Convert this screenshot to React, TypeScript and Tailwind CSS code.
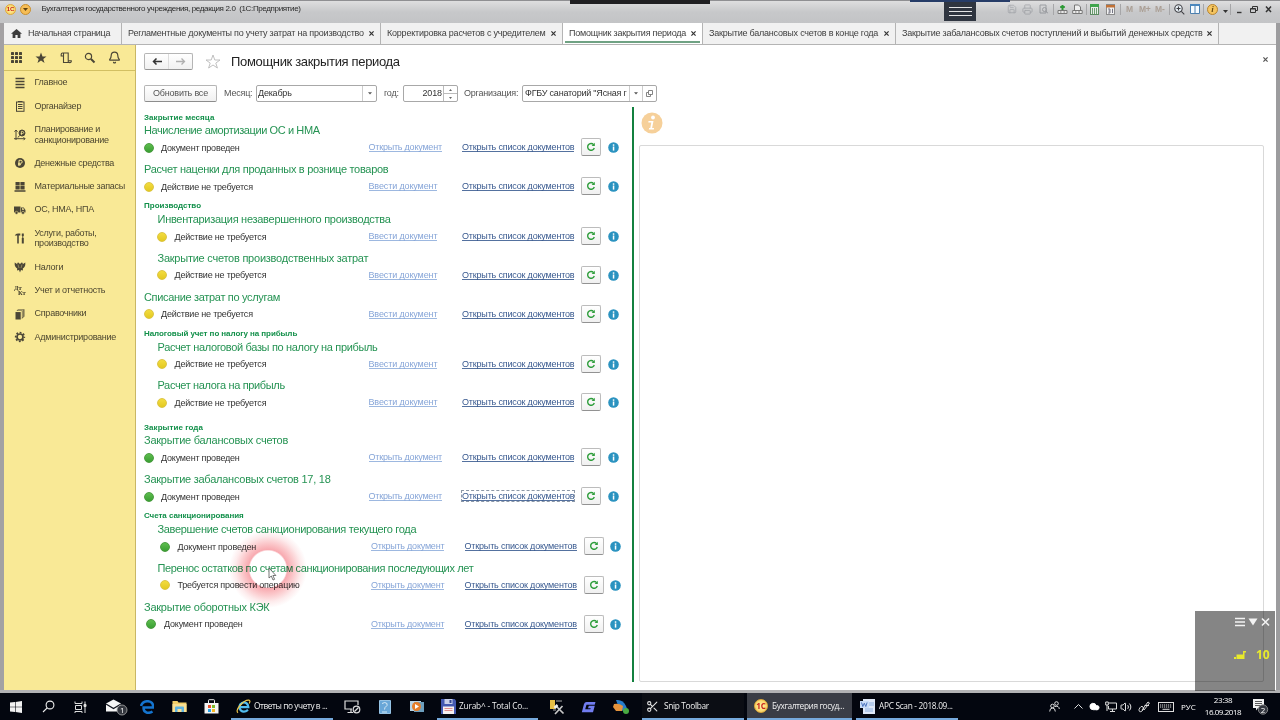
import React from "react";
import { Bell, Cloud, Volume2, Printer, Save, Scissors } from "lucide-react";

type Kind = "green" | "yellow";
type Item = { title: string; tw: string; state: string; kind: Kind; open?: boolean; indent?: boolean; shift?: boolean; focus?: boolean };
type Group = { head: string; hw?: string; gap?: boolean; items: Item[] };

const DONE = "Документ проведен";
const NONE = "Действие не требуется";

const groups: Group[] = [
  {
    head: "Закрытие месяца",
    hw: "tracking-[0.06px]",
    items: [
      { title: "Начисление амортизации ОС и НМА", tw: "tracking-[-0.4px]", state: DONE, kind: "green", open: true },
      { title: "Расчет наценки для проданных в рознице товаров", tw: "tracking-[-0.3px]", state: NONE, kind: "yellow" },
    ],
  },
  {
    head: "Производство",
    items: [
      { title: "Инвентаризация незавершенного производства", tw: "tracking-[-0.28px]", state: NONE, kind: "yellow", indent: true },
      { title: "Закрытие счетов производственных затрат", tw: "tracking-[-0.24px]", state: NONE, kind: "yellow", indent: true },
      { title: "Списание затрат по услугам", tw: "tracking-[-0.33px]", state: NONE, kind: "yellow" },
    ],
  },
  {
    head: "Налоговый учет по налогу на прибыль",
    hw: "tracking-[-0.07px]",
    items: [
      { title: "Расчет налоговой базы по налогу на прибыль", tw: "tracking-[-0.34px]", state: NONE, kind: "yellow", indent: true },
      { title: "Расчет налога на прибыль", tw: "tracking-[-0.35px]", state: NONE, kind: "yellow", indent: true },
    ],
  },
  {
    head: "Закрытие года",
    hw: "tracking-[0.06px]",
    gap: true,
    items: [
      { title: "Закрытие балансовых счетов", tw: "tracking-[-0.25px]", state: DONE, kind: "green", open: true },
      { title: "Закрытие забалансовых счетов 17, 18", tw: "tracking-[-0.25px]", state: DONE, kind: "green", open: true, focus: true },
    ],
  },
  {
    head: "Счета санкционирования",
    hw: "tracking-[-0.06px]",
    items: [
      { title: "Завершение счетов санкционирования текущего года", tw: "tracking-[-0.32px]", state: DONE, kind: "green", open: true, indent: true, shift: true },
      { title: "Перенос остатков по счетам санкционирования последующих лет", tw: "tracking-[-0.37px]", state: "Требуется провести операцию", kind: "yellow", open: true, indent: true, shift: true },
      { title: "Закрытие оборотных КЭК", tw: "tracking-[-0.24px]", state: DONE, kind: "green", open: true, shift: true },
    ],
  },
];

function Reload() {
  return (
    <svg width="10" height="10" viewBox="0 0 10 10" fill="none">
      <path d="M7.6 2.6A3.4 3.4 0 1 0 8.3 6" stroke="#2f9e3c" strokeWidth="1.4" />
      <path d="M5.6 3.9h3.2V.8z" fill="#2f9e3c" />
    </svg>
  );
}

function InfoDot() {
  return (
    <svg width="11" height="11" viewBox="0 0 11 11">
      <circle cx="5.5" cy="5.5" r="5.3" fill="#2b93c0" />
      <rect x="4.8" y="2.3" width="1.5" height="1.5" fill="#fff" />
      <rect x="4.8" y="4.5" width="1.5" height="4.1" fill="#fff" />
    </svg>
  );
}

function Row({ it }: { it: Item }) {
  return (
    <div className={`h-[38.7px] ${it.indent ? "pl-[13.5px]" : ""}`}>
      <div className={`flex h-[14px] items-center whitespace-nowrap text-[11px] leading-[14px] text-[#259353] ${it.tw}`}>{it.title}</div>
      <div className={`flex h-[20px] items-center whitespace-nowrap text-[9px] ${it.shift ? "ml-[2.500px]" : ""}`}>
        <div className={`-ml-[0.500px] flex items-center pt-[1px] ${it.indent ? "w-[211.500px]" : "w-[225px]"} ${it.shift ? "gap-[8px]" : "gap-[7.500px]"}`}>
          <span
            className={`size-[10px] rounded-full border ${
              it.kind === "green"
                ? "border-[#4a9c40] bg-linear-to-b from-[#5dbd4e] to-[#3a9f33]"
                : "border-[#dcc544] bg-linear-to-b from-[#f3dc3e] to-[#e3c91f]"
            }`}
          />
          <span className="leading-[10px] tracking-[-0.200px] text-[#333]">{it.state}</span>
        </div>
        <div className="flex w-[93.500px] text-[#86a5d8]">
          <span className={`h-[10px] border-b border-[#9db8e0] leading-[11px] ${it.open ? "tracking-[-0.220px]" : "tracking-[-0.130px]"}`}>{it.open ? "Открыть документ" : "Ввести документ"}</span>
        </div>
        <div className="flex w-[119px] text-[#38598f]">
          <span className={`h-[10px] border-b border-[#54719f] leading-[11px] tracking-[-0.180px] ${it.focus ? "outline-1 outline-dashed outline-[#8c98a8]" : ""}`}>Открыть список документов</span>
        </div>
        <div className="flex h-[18px] w-[20px] items-center justify-center rounded-[2px] border border-[#bcbcbc] border-b-[#929292] bg-linear-to-b from-white to-[#f0f0f0]">
          <Reload />
        </div>
        <div className="ml-[6.500px] pt-[1px]">
          <InfoDot />
        </div>
      </div>
    </div>
  );
}

const S = "#4b4636";
const sideIcons: Record<string, React.ReactNode> = {
  main: <path d="M1.5 1.5h9M1.5 4.500h9M1.5 7.500h9M1.5 10.500h9" stroke={S} strokeWidth="1.3" />,
  org: (
    <g fill="none" stroke={S}>
      <rect x="2.5" y="2" width="7.5" height="9.3" />
      <path d="M4 1.5h4.5M4 4.5h4.5M4 6.5h4.5M4 8.5h4.5" />
    </g>
  ),
  plan: (
    <g fill="none" stroke={S}>
      <path d="M2 1v10M.5 2.7 2 1l1.500 1.7M0 9.700h11M9.500 8.200 11 9.700 9.500 11.200" />
      <circle cx="8" cy="4" r="3" fill={S} />
      <path d="M7.400 6V2.500h1.300q1 .1 1 1t-1 1H6.700" stroke="#f9e996" strokeWidth=".8" />
      <path d="M4 8.500 5.500 6.500" />
    </g>
  ),
  money: (
    <g>
      <circle cx="6" cy="6" r="5" fill={S} />
      <path d="M5 9V3.300h1.800q1.400.1 1.400 1.500T6.800 6.300H4M4 7.700h3" stroke="#f9e996" fill="none" />
    </g>
  ),
  stock: (
    <g fill={S}>
      <path d="M1.500 1h4.200v3.500H1.500zM6.400 1h4.200v3.500H6.400zM1.500 5.100h4.200v3.400H1.500zM6.400 5.100h4.200v3.400H6.400zM.5 9.300h11v1.500H.5z" />
    </g>
  ),
  truck: (
    <g fill={S}>
      <path d="M0 2.500h6.500v6H0zM7 3.500h2.700L11.500 6v2.500H7z" />
      <circle cx="2.500" cy="8.800" r="1.500" stroke="#f9e996" strokeWidth=".5" />
      <circle cx="9" cy="8.800" r="1.500" stroke="#f9e996" strokeWidth=".5" />
      <path d="M8 4.300h1.400l.9 1.500H8z" fill="#f9e996" />
    </g>
  ),
  tools: (
    <g fill={S}>
      <path d="M.8 3.800Q1.500 1.500 4 1.500h2.300v2H4.800v8H3.200v-8H2z" />
      <path d="M7.800 1.500h2v2.500h-2zM8.300 4h1v2h-1zM7.800 6h2v5.500h-2z" />
    </g>
  ),
  eagle: (
    <g fill={S}>
      <path d="M.7 1.500 3 3l1-1.700L6 3l2-1.700L9 3l2.300-1.500q.4 4.500-2.500 6L9 9.500 7 9l-1 2.500L5 9l-2 .5.200-2Q.3 6 .7 1.500z" />
      <path d="m4 3.500 1 3.500M8 3.500 7 7" stroke="#f9e996" strokeWidth=".4" />
    </g>
  ),
  books: (
    <g fill={S}>
      <path d="M1.500 4h5.300v7.500H1.500z" />
      <path d="M2.500 3 4 1.300h6.500v7.200L7.700 11V3.100z" opacity=".8" />
      <path d="M2.300 3.600h5v7M3.800 2.200h5v7" stroke="#f9e996" strokeWidth=".5" fill="none" />
    </g>
  ),
  gear: (
    <g fill="none" stroke={S}>
      <circle cx="6" cy="6" r="3" strokeWidth="1.700" />
      <circle cx="6" cy="6" r="4.400" strokeWidth="1.500" strokeDasharray="1.850 1.606" strokeDashoffset=".9" />
    </g>
  ),
};

const side: { icon: string; lines: string[]; h: string }[] = [
  { icon: "main", lines: ["Главное"], h: "h-[23.3px]" },
  { icon: "org", lines: ["Органайзер"], h: "h-[23.3px]" },
  { icon: "plan", lines: ["Планирование и", "санкционирование"], h: "h-[34px]" },
  { icon: "money", lines: ["Денежные средства"], h: "h-[23.3px]" },
  { icon: "stock", lines: ["Материальные запасы"], h: "h-[23.3px]" },
  { icon: "truck", lines: ["ОС, НМА, НПА"], h: "h-[23.3px]" },
  { icon: "tools", lines: ["Услуги, работы,", "производство"], h: "h-[34px]" },
  { icon: "eagle", lines: ["Налоги"], h: "h-[23.3px]" },
  { icon: "dtkt", lines: ["Учет и отчетность"], h: "h-[23.3px]" },
  { icon: "books", lines: ["Справочники"], h: "h-[23.3px]" },
  { icon: "gear", lines: ["Администрирование"], h: "h-[23.3px]" },
];

function SideIcon({ n }: { n: string }) {
  if (n === "dtkt")
    return (
      <span className="flex w-[12px] flex-col font-['Liberation_Serif',serif] text-[6.500px] font-bold leading-[5px] text-[#3b3626]">
        <span>Дт</span>
        <span className="pl-[4px]">Кт</span>
      </span>
    );
  return (
    <svg width="12" height="12" viewBox="0 0 12 12">
      {sideIcons[n]}
    </svg>
  );
}

function Sidebar() {
  return (
    <div className="flex w-[132px] flex-col border-r border-[#c9b765] bg-[#f9e996]">
      <div className="flex h-[26px] items-center border-b border-[#d2bf62] pl-[7px] text-[#4b4636]">
        <svg width="11" height="11" viewBox="0 0 11 11" fill={S}>
          {[0, 4, 8].map((y) => [0, 4, 8].map((x) => <rect key={`${x}${y}`} x={x} y={y} width="3" height="3" rx=".6" />))}
        </svg>
        <svg className="ml-[13px] mt-[1px]" width="12" height="12" viewBox="0 0 12 12" fill={S}>
          <path d="m6 .6 1.500 3.900h4L8.300 7l1.200 4L6 8.600 2.500 11l1.200-4L.5 4.500h4z" />
        </svg>
        <svg className="ml-[13px]" width="13" height="12" viewBox="0 0 13 12" fill="none" stroke={S} strokeWidth="1.1">
          <path d="M3.500 4H1.200V2.300Q1.300 1 2.500 1h5.700v7.500M3.500 1.500v9h6.300M8 8.700h3.300q.2 1.900-1.600 1.900Q8 10.600 8 8.700" />
        </svg>
        <svg className="ml-[11px]" width="12" height="12" viewBox="0 0 12 12" fill="none" stroke={S}>
          <circle cx="4.500" cy="4.500" r="3.100" strokeWidth="1.200" />
          <path d="m7 7 3.500 3.500" strokeWidth="2" />
        </svg>
        <Bell className="ml-[12px]" size={13} strokeWidth={2.2} />
      </div>
      <div className="flex flex-col">
        {side.map((s) => (
          <div key={s.icon} className={`flex items-center pl-[10px] ${s.h}`}>
            <SideIcon n={s.icon} />
            <div className="ml-[8.500px] whitespace-nowrap text-[9px] leading-[10.700px] tracking-[-0.250px] text-[#4c4630]">
              {s.lines.map((l) => (
                <div key={l}>{l}</div>
              ))}
            </div>
          </div>
        ))}
      </div>
    </div>
  );
}

function OneC({ className = "" }: { className?: string }) {
  return (
    <span className={`flex items-center justify-center rounded-full border border-[#e0a93a] bg-radial from-[#fff3a8] to-[#f6c945] font-bold text-[#c8221a] ${className}`}>1С</span>
  );
}

function Sep({ className = "" }: { className?: string }) {
  return <span className={`h-[11px] w-px bg-[#a6a6a8] ${className}`} />;
}

function TopBar() {
  return (
    <div className="flex h-[23px] items-start border-t border-[#8f8f92] bg-linear-to-b from-[#dededf] via-[#c7c8ca] to-[#c3c4c6]">
      <div className="flex h-[16px] flex-1 items-center pl-[5px]">
        <OneC className="h-[11px] w-[11px] text-[6px]" />
        <span className="ml-[4px] flex size-[11px] items-center justify-center rounded-full border border-[#c98f2e] bg-[#f6bd55]">
          <svg width="5" height="3" viewBox="0 0 5 3">
            <path d="M0 0h5L2.500 3z" fill="#5f4210" />
          </svg>
        </span>
        <span className="ml-[10.500px] whitespace-pre text-[8px] tracking-[-0.360px] text-[#2a2a2a]">Бухгалтерия государственного учреждения, редакция 2.0  (1С:Предприятие)</span>
      </div>
      <div className="flex h-[16px] items-center text-[#8c8f95]">
        <Save size={10} className="opacity-60" />
        <Printer size={11} className="ml-[5px] opacity-60" />
        <svg className="ml-[6px] opacity-60" width="9" height="10" viewBox="0 0 9 10" fill="none" stroke="#777a80">
          <path d="M1 1h6v8H1z" />
          <circle cx="5.500" cy="5.500" r="2" />
          <path d="m7 7 2 2.500" />
        </svg>
        <Sep className="ml-[5px] mr-[3px]" />
        <svg width="11" height="11" viewBox="0 0 11 11" fill="none" stroke="#777">
          <path d="M1 6.500h9v3H1zM3 8h1.500M6.500 8H8" fill="#e9e9e9" />
          <path d="M5.500 6V1M3.200 3h4.600" stroke="#2e9a36" strokeWidth="2" />
        </svg>
        <svg className="ml-[4px]" width="11" height="11" viewBox="0 0 11 11" fill="#eee" stroke="#777">
          <path d="M2.500 6V1h4l2 2v3M.7 6.500h9.500v3H.7z" />
          <path d="M3 8h1.500M6 8h2" />
        </svg>
        <Sep className="ml-[3px] mr-[3px]" />
        <svg width="9" height="11" viewBox="0 0 9 11">
          <rect x=".5" y=".5" width="8" height="10" fill="#e8eee8" stroke="#5d8b62" />
          <path d="M0 0h9v3H0z" fill="#3fa54c" />
          <path d="M2.500 4v6M4.500 4v6M6.500 4v6" stroke="#6c9c70" />
        </svg>
        <svg className="ml-[7px]" width="9" height="11" viewBox="0 0 9 11">
          <rect x=".5" y=".5" width="8" height="10" fill="#f2f2f2" stroke="#8b8b8b" />
          <path d="M0 1h9v2.500H0z" fill="#c07136" />
          <path d="M2 5h2v2H2.500M4 7v2H2M6.500 4.800V9" stroke="#667" fill="none" strokeWidth=".9" />
        </svg>
        <Sep className="ml-[5px] mr-[5px]" />
        <span className="w-[7px] text-[8.500px] font-bold text-[#ab9f95]">M</span>
        <span className="ml-[6px] w-[12px] text-[8.500px] font-bold tracking-[-0.3px] text-[#ab9f95]">M+</span>
        <span className="ml-[4px] w-[10px] text-[8.500px] font-bold text-[#ab9f95]">M-</span>
        <Sep className="ml-[4px] mr-[4px]" />
        <svg width="11" height="11" viewBox="0 0 11 11" fill="none" stroke="#3e3e42" strokeWidth="1.100">
          <circle cx="4.500" cy="4.500" r="3.700" fill="#e6eef4" />
          <path d="M2.500 4.500h4M4.500 2.500v4M7.300 7.300l3 3" />
        </svg>
        <svg className="ml-[5px]" width="10" height="10" viewBox="0 0 10 10">
          <path d="M.5.5h9v9h-9zM5 1v8" fill="#f6fbff" stroke="#4b7fae" />
          <path d="M0 0h10v2H0z" fill="#4b87bd" />
        </svg>
        <Sep className="ml-[3px] mr-[3px]" />
        <span className="flex size-[11px] items-center justify-center rounded-full border border-[#b98530] bg-[#f5c560] font-['Liberation_Serif',serif] text-[9px] font-bold italic leading-none text-[#6b4c12]">i</span>
        <svg className="ml-[5px] mt-[4px]" width="5" height="3" viewBox="0 0 5 3">
          <path d="M0 0h5L2.500 3z" fill="#333" />
        </svg>
        <Sep className="ml-[2px]" />
        <svg className="ml-[5px] mr-[8px]" width="36" height="9" viewBox="0 0 36 9" fill="none" stroke="#333">
          <path d="M1 7.500h4.500" strokeWidth="1.400" />
          <path d="M16.500 3V1.500h5v4H20M14.500 3.500h5v4h-5zM14.500 4h5" />
          <path d="m30 1.500 5 5.500M35 1.500 30 7" strokeWidth="1.500" />
        </svg>
      </div>
    </div>
  );
}

const tabs: { t: string; w: string; active?: boolean }[] = [
  { t: "Регламентные документы по учету затрат на производство", w: "w-[259px]" },
  { t: "Корректировка расчетов с учредителем", w: "w-[182px]" },
  { t: "Помощник закрытия периода", w: "w-[140px]", active: true },
  { t: "Закрытие балансовых счетов в конце года", w: "w-[193px]" },
  { t: "Закрытие забалансовых счетов поступлений и выбытий денежных средств", w: "w-[323px]" },
];

function Cross({ c = "#333" }: { c?: string }) {
  return (
    <svg className="shrink-0" width="5" height="5" viewBox="0 0 5 5">
      <path d="m.4.4 4.200 4.200M4.600.4.400 4.600" stroke={c} strokeWidth="1.200" />
    </svg>
  );
}

function Tabs() {
  return (
    <div className="flex h-[22px] border-b border-[#b4b4b4] bg-[#f1f1f1] text-[9px] tracking-[-0.220px] text-[#404040]">
      <div className="flex w-[118px] items-center border-r border-[#b4b4b4] pl-[7px]">
        <svg width="11" height="9" viewBox="0 0 11 9" fill="#3c3c3c">
          <path d="M5.500 0 11 4.700H9.400V9H6.600V6H4.400v3H1.600V4.700H0z" />
        </svg>
        <span className="ml-[6px] whitespace-nowrap tracking-[-0.270px]">Начальная страница</span>
      </div>
      {tabs.map((t) => (
        <div key={t.t} className={`flex flex-col border-r border-[#b4b4b4] ${t.w} ${t.active ? "bg-white px-[2px]" : ""}`}>
          <div className={`flex items-center justify-between whitespace-nowrap ${t.active ? "h-[18px] pl-[4px] pr-[4px] pt-[3px]" : "h-[21px] pl-[6px] pr-[6px]"}`}>
            <span>{t.t}</span>
            <Cross />
          </div>
          {t.active && <div className="h-[2px] bg-[#6fa283]" />}
        </div>
      ))}
    </div>
  );
}

const field = "flex h-[17px] items-center rounded-[2px] border border-[#a8a8a8] bg-white text-[9px] text-[#333]";

function Down() {
  return (
    <svg width="4" height="3" viewBox="0 0 4 3">
      <path d="M0 .3h4L2 2.600z" fill="#555" />
    </svg>
  );
}

function Toolbar() {
  return (
    <div className="h-[62px] pl-[8px]">
      <div className="flex h-[33px] items-center">
        <div className="flex h-[17px] w-[49px] rounded-[2px] border border-[#b5b5b5] border-b-[#959595] bg-linear-to-b from-white to-[#f1f1f1]">
          <div className="flex flex-1 items-center justify-center border-r border-[#ddd]">
            <svg width="10" height="7" viewBox="0 0 10 7">
              <path d="M10 3.500H2M4.500.500l-3 3 3 3" stroke="#333" strokeWidth="1.500" fill="none" />
            </svg>
          </div>
          <div className="flex flex-1 items-center justify-center">
            <svg width="10" height="7" viewBox="0 0 10 7">
              <path d="M0 3.500h8M5.500.500l3 3-3 3" stroke="#b0b0b0" strokeWidth="1.300" fill="none" />
            </svg>
          </div>
        </div>
        <svg className="ml-[12px]" width="16" height="15" viewBox="0 0 16 15" fill="none" stroke="#b9b9b9" strokeWidth=".9">
          <path d="m8 1 1.800 5h5.200l-4.200 3.100L12.400 14 8 11l-4.400 3 1.600-4.900L1 6h5.200z" />
        </svg>
        <h1 className="ml-[10px] whitespace-nowrap text-[13px] tracking-[-0.330px] text-[#222]">Помощник закрытия периода</h1>
      </div>
      <div className="mt-[7px] flex h-[17px] items-center whitespace-nowrap text-[9px] tracking-[-0.210px] text-[#555]">
        <div className="flex h-[17px] w-[73px] items-center justify-center rounded-[2px] border border-[#b5b5b5] border-b-[#8d8d8d] bg-linear-to-b from-white to-[#f0f0f0]">Обновить все</div>
        <span className="ml-[7px] w-[32px]">Месяц:</span>
        <div className={`${field} w-[121px] pl-[1px]`}>
          <span className="flex-1">Декабрь</span>
          <span className="flex h-full w-[14px] items-center justify-center border-l border-[#ccc]"><Down /></span>
        </div>
        <span className="ml-[7px] w-[19px]">год:</span>
        <div className={`${field} w-[55px]`}>
          <span className="flex-1 pr-px text-right tracking-[-0.100px]">2018</span>
          <span className="flex h-full w-[14px] flex-col items-center border-l border-[#bbb]">
            <span className="flex w-full flex-1 items-center justify-center border-b border-[#bbb]">
              <svg width="3" height="2" viewBox="0 0 3 2"><path d="M0 2h3L1.500 0z" fill="#666" /></svg>
            </span>
            <span className="flex flex-1 items-center">
              <svg width="3" height="2" viewBox="0 0 3 2"><path d="M0 0h3L1.500 2z" fill="#666" /></svg>
            </span>
          </span>
        </div>
        <span className="ml-[6px] w-[58px]">Организация:</span>
        <div className={`${field} w-[135px] pl-[2px]`}>
          <span className="w-[104px]">ФГБУ санаторий "Ясная г</span>
          <span className="flex h-full flex-1 items-center justify-center border-l border-[#ccc]"><Down /></span>
          <span className="flex h-full w-[14px] items-center justify-center border-l border-[#ccc]">
            <svg width="7" height="7" viewBox="0 0 7 7" fill="none" stroke="#777" strokeWidth=".9">
              <path d="M2.500.500h4v4h-4zM2.500 2.500h-2v4h4v-2" />
            </svg>
          </span>
        </div>
      </div>
    </div>
  );
}

const segoe = "font-['Open_Sans','Noto_Sans',sans-serif]";

function Task({ w, label, tr = "", children, active, bg }: { w: string; label: string; tr?: string; children: React.ReactNode; active?: boolean; bg?: boolean }) {
  return (
    <div className={`flex h-full shrink-0 flex-col ${w} ${active ? "bg-[#3a3d46]" : bg ? "bg-[#0b0d14]" : ""}`}>
      <div className="flex h-[25px] items-center gap-[4px] pl-[4px] pt-[1px]">
        {children}
        <span className={`whitespace-nowrap text-[8.300px] text-[#f0f0f0] ${tr}`}>{label}</span>
      </div>
      <div className="h-[2px] bg-[#76a9dc]" />
    </div>
  );
}

function Taskbar() {
  return (
    <div className={`flex h-[27px] items-center bg-[#03060f] text-white ${segoe}`}>
      <div className="flex h-full w-[231px] items-center pl-[10px]">
        <svg width="12" height="12" viewBox="0 0 12 12" fill="#f2f2f2">
          <path d="M0 1.600 5 1v4.700H0zM5.600.9 12 0v5.700H5.600zM0 6.300h5V11l-5-.6zM5.600 6.300H12V12l-6.400-.9z" />
        </svg>
        <svg className="ml-[20px]" width="13" height="13" viewBox="0 0 13 13" fill="none" stroke="#eee" strokeWidth="1.100">
          <circle cx="8" cy="5" r="3.900" />
          <path d="M5.200 7.800 1 12" />
        </svg>
        <svg className="ml-[19px]" width="13" height="12" viewBox="0 0 13 12" fill="none" stroke="#ddd">
          <path d="M1 .5v2h7v-2M1.500 4.500h6v4h-6zM1 12v-1.500h7V12M11 .5v11.500" />
          <path d="M10 3.500h2v2h-2z" fill="#ddd" />
        </svg>
        <svg className="ml-[18px]" width="23" height="18" viewBox="0 0 23 18">
          <path d="M1 5.500 8.500 1.500 16 5.500v8H1z" fill="#f5f5f5" />
          <path d="m1 6 7.500 4.500L16 6" fill="none" stroke="#10131c" strokeWidth="1.300" />
          <circle cx="17" cy="12" r="5" fill="#34373f" stroke="#aaa" strokeWidth=".8" />
          <text x="15.100" y="15" fontSize="8" fill="#fff">1</text>
        </svg>
        <svg className="ml-[12px]" width="14" height="14" viewBox="0 0 14 14" fill="none">
          <path d="M12.500 11.500q-2.500 1.700-5.500 1.200-3.800-.8-3.400-5.200h9.500Q13.500 1.300 7.500 1.200 2.500 1.200 1 6" stroke="#1474cf" strokeWidth="2.500" />
        </svg>
        <svg className="ml-[18px]" width="15" height="13" viewBox="0 0 15 13">
          <path d="M.5 1h5l1 1.500h8V12H.5z" fill="#f4cf68" />
          <path d="M.5 4h14v8H.5z" fill="#fae093" />
          <path d="M3 12V7.500q0-1 1-1h7q1 0 1 1V12H9.500V9h-4v3z" fill="#62b5e0" />
        </svg>
        <svg className="ml-[17px]" width="15" height="15" viewBox="0 0 15 15">
          <path d="M.5 4h14v10.500H.5z" fill="#f4f4f4" />
          <path d="M4.500 4V1.300q.1-.6.700-.6h4.600q.6 0 .7.600V4" fill="none" stroke="#eee" />
          <path d="M4 6h3v3H4z" fill="#e9522d" />
          <path d="M8 6h3v3H8z" fill="#7cb928" />
          <path d="M4 10h3v3H4z" fill="#2aa3e8" />
          <path d="M8 10h3v3H8z" fill="#f7b721" />
        </svg>
      </div>
      <Task w="w-[102px]" label="Ответы по учету в ..." tr="tracking-[-0.420px] -ml-px">
        <svg className="ml-[1px]" width="15" height="15" viewBox="0 0 15 15" fill="none">
          <path d="M12 10.800q-4 3.300-7.200.6Q2.500 9 4.200 5.500 7 2 10.500 4.200q1.800 1.300 1.800 3.900H4" stroke="#51bdf0" strokeWidth="2.300" />
          <path d="M2 13.800Q-.5 12 4 6.500 9 .6 13.200 1.200q1.500.6 0 3.300" stroke="#efc64a" strokeWidth="1.200" />
        </svg>
      </Task>
      <div className="flex h-full w-[104px] items-center pl-[11px]">
        <svg width="17" height="14" viewBox="0 0 17 14" fill="none" stroke="#ddd" strokeWidth="1.200">
          <path d="M8 9H1V1h13v4M7 9v3M3.500 12.500H9" />
          <circle cx="12.500" cy="9.500" r="3.300" />
          <path d="m10.500 11.500 4-4" />
        </svg>
        <svg className="ml-[18px]" width="12" height="14" viewBox="0 0 12 14">
          <path d="M.5.5h11v13H.5z" fill="#69a7d8" stroke="#96c3e5" />
          <path d="M3 3.500q3-2 5 0 1 2-2 4l-.5 2M3 12h5" stroke="#d5e9f5" fill="none" />
        </svg>
        <svg className="ml-[19px]" width="14" height="13" viewBox="0 0 14 13">
          <path d="M0 1h11v10H0z" fill="#b9d5e6" />
          <path d="M4 2h10v10H4z" fill="#6d9ebd" />
          <circle cx="6.500" cy="6.500" r="4.500" fill="#e67e29" />
          <path d="m5 4 4 2.500L5 9z" fill="#fff" />
        </svg>
      </div>
      <Task w="w-[101px]" label="Zurab^ - Total Co..." tr="tracking-[-0.190px] -ml-px">
        <svg width="15" height="15" viewBox="0 0 15 15">
          <path d="M0 0h13.500L15 1.500V15H0z" fill="#4358b0" />
          <path d="M3.500 0h8v5h-8z" fill="#c8d0ea" />
          <path d="M8.500 1h2v3h-2z" fill="#32448f" />
          <path d="M2 7.500h11V15H2z" fill="#f7f0f0" />
          <path d="M3.500 9.500h8M3.500 11.500h8" stroke="#df8d8d" />
        </svg>
      </Task>
      <div className="flex h-full w-[104px] items-center pl-[11px]">
        <svg width="16" height="16" viewBox="0 0 16 16" fill="none">
          <path d="M1 1h5v9H1z" fill="#e8bf45" />
          <path d="M7 2h6M4 11h3" stroke="#aaa" />
          <path d="m6 15 7.500-8M7 7l7.500 7.500" stroke="#c8c8c8" strokeWidth="1.700" />
          <path d="m5.500 9 3-3" stroke="#efefef" strokeWidth="2.500" />
        </svg>
        <svg className="ml-[16px]" width="15" height="12" viewBox="0 0 15 12">
          <path d="M14.500 1 13.700 3.700H5.500L4.200 8.300h5.200l.3-1H7l.8-2.500h6L12 11.300H.8L3 3Q3.700 1 5.500 1z" fill="#727df0" />
        </svg>
        <svg className="ml-[17px]" width="17" height="16" viewBox="0 0 17 16">
          <path d="M3 1q7-1 10 6l2 5q-6 1-9-3z" fill="#267dcb" />
          <path d="M1 5q5-1 9 2l-1 5H3L0 8z" fill="#e4933c" />
          <circle cx="13" cy="12" r="3" fill="#49aa42" />
        </svg>
      </div>
      <Task w="w-[102px]" label="Snip Toolbar" tr="tracking-[-0.330px] pl-[1px]" bg>
        <Scissors size={13} color="#e4e4e4" />
      </Task>
      <div className="w-[3px]" />
      <Task w="w-[105px]" label="Бухгалтерия госуд..." tr="tracking-[-0.400px]" active>
        <OneC className="ml-[3px] size-[14px] text-[8px]" />
      </Task>
      <div className="w-[4px]" />
      <Task w="w-[102px]" label="APC Scan - 2018.09..." tr="tracking-[-0.300px]">
        <svg width="15" height="15" viewBox="0 0 15 15">
          <path d="M3 0h12v15H3z" fill="#dfe9f8" />
          <path d="M9 4h5M9 6h5M5 10h8M5 12h8" stroke="#8daede" />
          <path d="M0 2h9v7H0z" fill="#c8dbf5" />
          <path d="m1.500 3.500 1.300 4 1.500-3.300 1.500 3.300 1.300-4" stroke="#4a72bd" fill="none" />
        </svg>
      </Task>
      <div className="flex h-full flex-1 items-center pl-[91px]">
        <svg width="11" height="11" viewBox="0 0 11 11" fill="none" stroke="#ddd">
          <circle cx="3.500" cy="5" r="1.800" />
          <circle cx="7.500" cy="2.500" r="1.800" />
          <path d="M.7 10.500q.1-3.500 2.800-3.500t2.800 3.500M6 5.500q4-1 4.300 2.500" />
        </svg>
        <svg className="ml-[14px]" width="9" height="5" viewBox="0 0 9 5" fill="none" stroke="#ddd">
          <path d="m.5 4.500 4-4 4 4" />
        </svg>
        <Cloud className="ml-[6px]" size={11} fill="#fff" color="#fff" />
        <svg className="ml-[5px]" width="12" height="11" viewBox="0 0 12 11" fill="none" stroke="#ddd">
          <path d="M4 2h7.500v6H3.500V5M5 10.500h5M7.500 8v2M.7 1h2.600v3H.7zM2 4v6" />
        </svg>
        <Volume2 className="ml-[3px]" size={12} strokeWidth={1.800} />
        <svg className="ml-[6px]" width="12" height="12" viewBox="0 0 12 12" fill="none" stroke="#ddd">
          <path d="M1 8.500Q3 4 5 6t-1 4-3-1.500M4 9l6-8 1.500 1-5.500 7M6.500 4.500h4.500" />
        </svg>
        <svg className="ml-[8px]" width="16" height="10" viewBox="0 0 16 10" fill="none" stroke="#ddd">
          <rect x=".5" y=".5" width="15" height="9" />
          <path d="M2 3h12M2 5h12" strokeDasharray="1.200 .8" />
          <path d="M4.500 7.300h7" />
        </svg>
        <span className="ml-[7px] w-[15px] text-[8px]">РУС</span>
        <div className="ml-[9px] w-[36px] whitespace-nowrap pb-[2px] text-center text-[8px] leading-[12px]">
          <div className="tracking-[-0.400px]">23:38</div>
          <div className="-mx-2 tracking-[-0.450px]">16.09.2018</div>
        </div>
        <svg className="ml-[11px]" width="17" height="17" viewBox="0 0 17 17">
          <path d="M1 1h11v9H6l-2 2.500V10H1z" fill="#f2f2f2" />
          <path d="M3 3.500h7M3 5.500h7M3 7.500h7" stroke="#333" strokeWidth=".8" />
          <circle cx="11" cy="11.500" r="4.700" fill="#34373f" stroke="#999" strokeWidth=".8" />
          <text x="8.700" y="14.600" fontSize="8" fill="#fff">2</text>
        </svg>
      </div>
    </div>
  );
}

export default function App() {
  return (
    <div className="relative flex h-[720px] w-[1280px] flex-col overflow-hidden bg-[#b5b5b7] font-['Liberation_Sans',Arial,sans-serif]">
      <TopBar />
      <div className="flex h-[667px] flex-col border-l-4 border-r-4 border-l-[#a3a1a3] border-r-[#9c9c9e]">
        <Tabs />
        <div className="flex h-[645px] bg-white">
          <Sidebar />
          <div className="flex flex-1 flex-col">
            <div className="flex justify-between">
              <Toolbar />
              <div className="mr-[8px] mt-[12px]"><Cross c="#555" /></div>
            </div>
            <div className="flex h-[575px]">
              <div className="w-[498px] border-r-2 border-[#13813f] pl-[8px] pt-[5px]">
                {groups.map((g) => (
                  <div key={g.head}>
                    <div className={`flex h-[11.400px] items-center whitespace-nowrap text-[8px] font-bold text-[#12904a] ${g.hw ?? ""} ${g.gap ? "mt-[5px]" : ""}`}>{g.head}</div>
                    {g.items.map((it) => (
                      <Row key={it.title} it={it} />
                    ))}
                  </div>
                ))}
              </div>
              <div className="flex flex-1 flex-col pl-[5px] pr-[12px]">
                <div className="flex h-[38px] items-center pb-[7px] pl-[2px]">
                  <svg width="22" height="22" viewBox="0 0 22 22">
                    <circle cx="11" cy="11" r="10.500" fill="#f6d09a" />
                    <circle cx="12" cy="5.500" r="1.900" fill="#fff" />
                    <path d="M7.500 9h5l-1.400 7h2l-.3 1.500H7.800l.3-1.500h1.200l1-5.500H7.300z" fill="#fff" />
                  </svg>
                </div>
                <div className="h-[537px] rounded-[2px] border border-[#d9d9d9]" />
              </div>
            </div>
          </div>
        </div>
      </div>
      <div className="h-[3px] shrink-0 bg-[#b2b2b4]" />
      <Taskbar />

      <div className="absolute left-[570px] top-0 h-[4px] w-[140px] bg-[#202022]" />
      <div className="absolute left-[910px] top-0 h-[2px] w-[100px] bg-[#263c68]" />
      <div className="absolute left-[944px] top-[2px] flex h-[19px] w-[32px] flex-col items-center justify-center gap-[3px] bg-[#2f3540]">
        <span className="h-px w-[23px] bg-[#e4e4e6]" />
        <span className="h-px w-[23px] bg-[#e4e4e6]" />
        <span className="h-px w-[23px] bg-[#e4e4e6]" />
      </div>

      <svg className="absolute left-[228px] top-[529px] mix-blend-multiply" width="80" height="80" viewBox="0 0 80 80">
        <defs>
          <radialGradient id="halo">
            <stop offset="0" stopColor="#fff" />
            <stop offset=".46" stopColor="#fff" />
            <stop offset=".5" stopColor="#f8aab0" />
            <stop offset=".66" stopColor="#fbc8cb" />
            <stop offset=".84" stopColor="#fdebec" />
            <stop offset="1" stopColor="#fff" />
          </radialGradient>
        </defs>
        <circle cx="40" cy="40" r="39" fill="url(#halo)" />
      </svg>
      <svg className="absolute left-[268px] top-[567px]" width="9" height="14" viewBox="0 0 9 14">
        <path d="M1 1v10l2.300-2 1.700 4 1.600-.7-1.700-3.800h3z" fill="#fff" stroke="#555" strokeWidth=".8" />
      </svg>

      <div className="absolute left-[1195px] top-[611px] h-[80px] w-[80px] bg-black/48 pl-[39px] pt-[6px]">
        <svg width="37" height="10" viewBox="0 0 37 10" fill="none" stroke="#f2f2f2">
          <path d="M1 1.500h10M1 5h10M1 8.500h10" strokeWidth="1.300" />
          <path d="M14.500 1.500h9l-4.500 7z" fill="#f2f2f2" stroke="none" />
          <path d="m28 1.500 7 7M35 1.500l-7 7" strokeWidth="1.700" />
        </svg>
        <div className="mt-[21px] flex h-[14px] items-center">
          <svg width="13" height="10" viewBox="0 0 13 10" fill="#e8ea2c">
            <path d="M0 7h2v2H0zM2.500 4.500H9V1h3v1.500h-1.500V9h-8z" />
          </svg>
          <span className={`ml-[9px] text-[12px] font-bold text-[#e8ea2c] ${segoe}`}>10</span>
        </div>
      </div>
    </div>
  );
}
